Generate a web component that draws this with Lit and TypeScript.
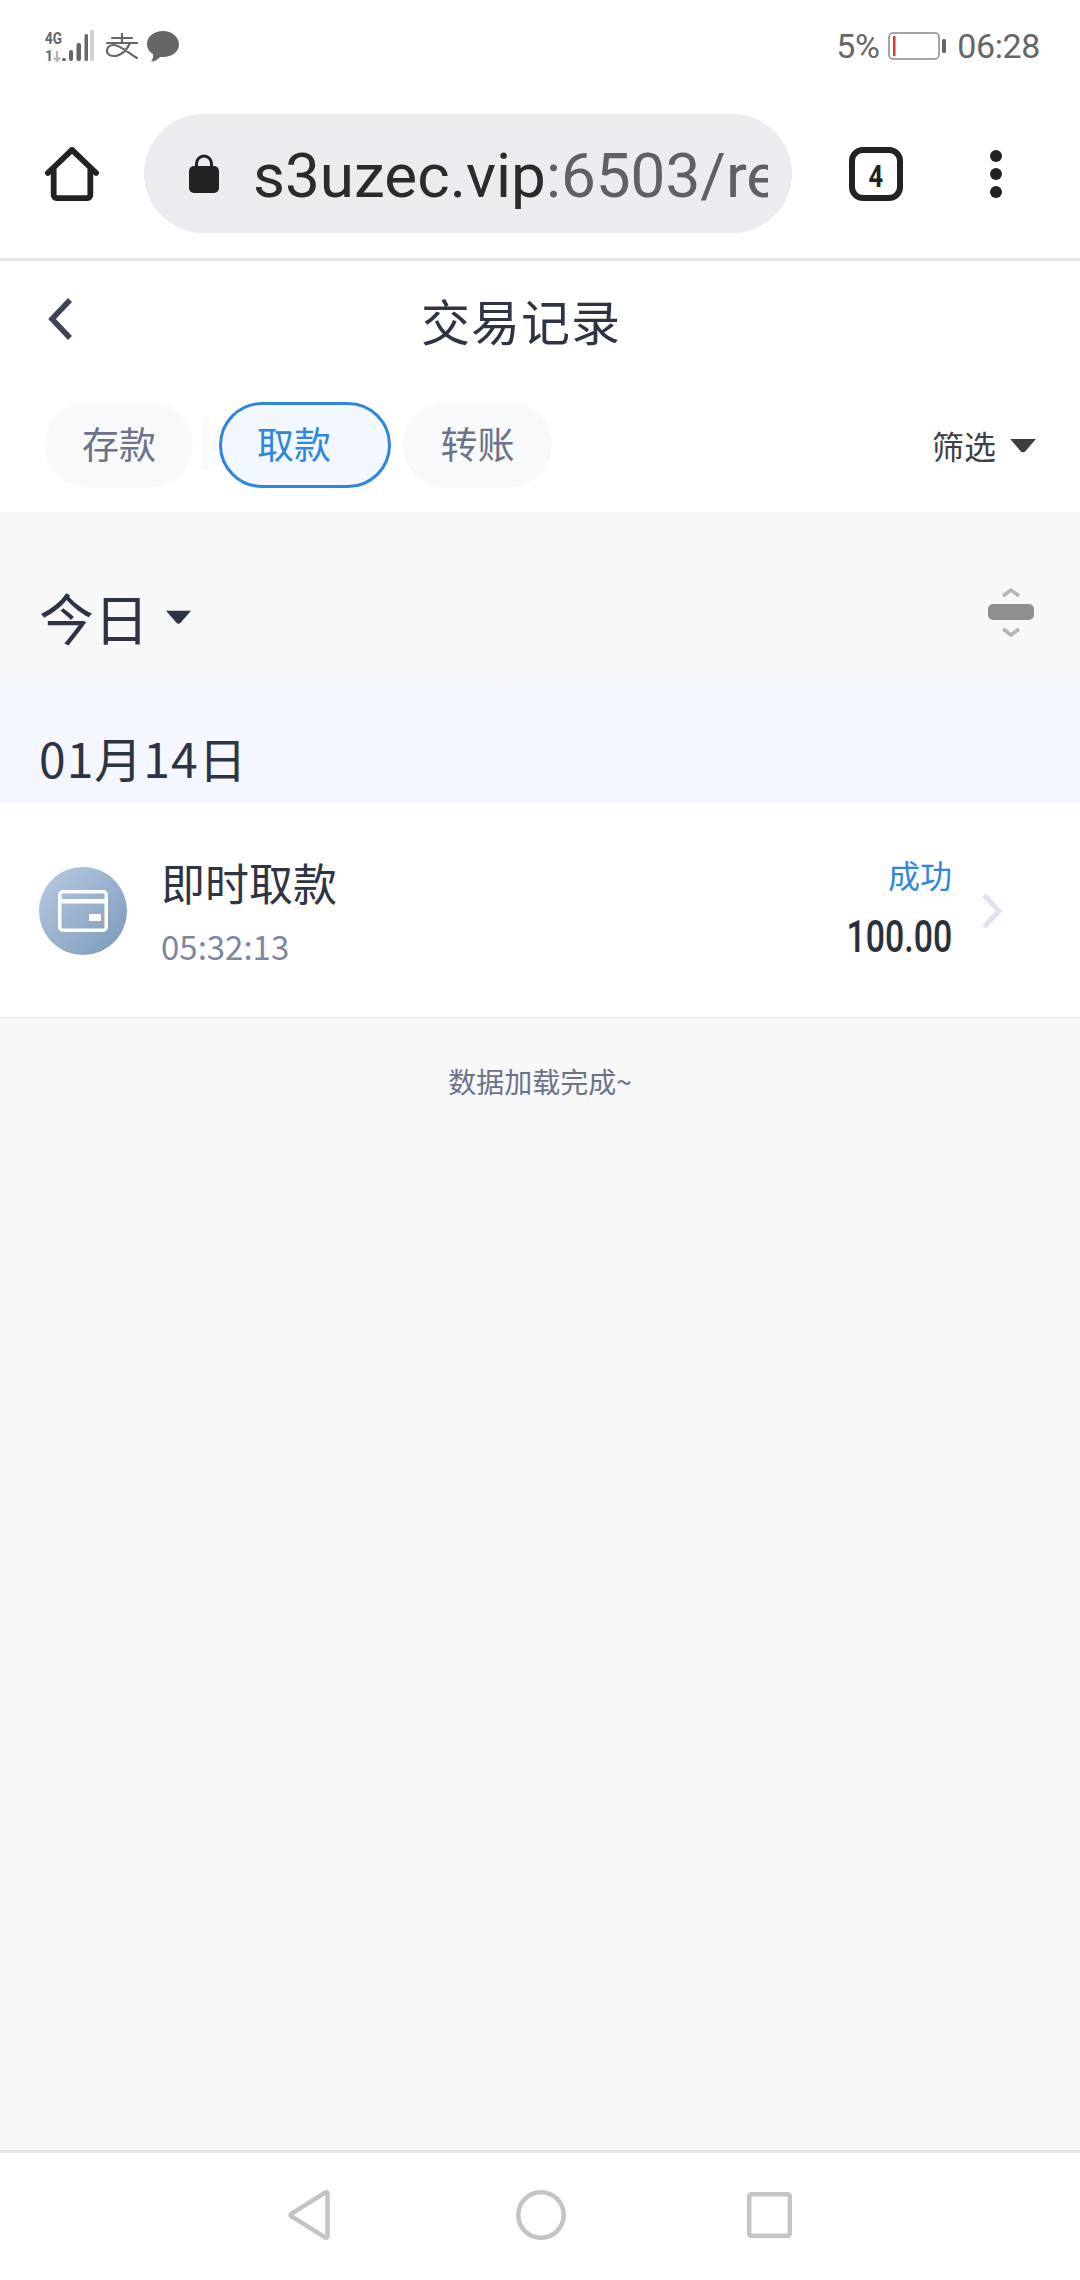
import { LitElement, html, css } from "lit";
import { customElement } from "lit/decorators.js";

@customElement("app-root")
export class AppRoot extends LitElement {
  static styles = css`
    :host {
      display: flex;
      flex-direction: column;
      width: 1080px;
      height: 2280px;
      overflow: hidden;
      background: #f8f8f9;
      font-family: "Noto Sans CJK SC", "Noto Sans", sans-serif;
      color: #2f3444;
    }
    svg { display: block; flex: none; }

    /* system status bar */
    .status {
      height: 92px;
      flex: none;
      background: #fff;
      display: flex;
      align-items: center;
      padding: 0 40px 0 44px;
      font-family: Roboto, sans-serif;
      font-size: 34px;
      color: #666;
    }
    .status .signal { overflow: visible; }
    .status .alipay { margin-left: 12px; }
    .status .bubble { margin-left: 9px; }
    .status .spacer { flex: 1; }
    .status .pct { letter-spacing: -0.5px; }
    .status .battery { margin: 0 11px 0 9px; }
    .status .clock { letter-spacing: -0.4px; }

    /* browser toolbar */
    .toolbar {
      height: 166px;
      flex: none;
      background: #fff;
      border-bottom: 3px solid #e5e5e5;
      display: flex;
      align-items: flex-start;
    }
    .toolbar .home { margin: 55px 0 0 45px; }
    .pill {
      margin: 22px 0 0 45px;
      width: 648px;
      height: 119px;
      flex: none;
      border-radius: 60px;
      background: #ebecf0;
      display: flex;
      align-items: center;
      padding-left: 45px;
      box-sizing: border-box;
    }
    .url {
      margin-left: 34px;
      padding-top: 4px;
      width: 515px;
      overflow: hidden;
      white-space: nowrap;
      font: 400 62px/80px Roboto, sans-serif;
      color: #2b2b2b;
    }
    .url span { color: #5f6063; }
    .tabs-btn { margin: 55px 0 0 57px; }
    .count {
      width: 54px;
      height: 54px;
      box-sizing: border-box;
      border: 6px solid #222;
      border-radius: 14px;
      display: flex;
      align-items: center;
      justify-content: center;
      font: 700 31px Roboto, sans-serif;
      color: #222;
    }
    .count span { display: block; margin-top: 4px; transform: scaleX(0.82); }
    .menu { margin: 58px 0 0 86px; }

    /* page title */
    .nav {
      height: 120px;
      flex: none;
      background: #fff;
      display: grid;
      grid-template-columns: 1fr auto 1fr;
      align-items: center;
      padding-left: 48px;
      padding-right: 86px;
    }
    .nav .back { margin-top: -4px; }
    .nav h1 { margin: -3px 0 0; font-size: 49px; font-weight: 400; line-height: 60px; color: #2f3444; letter-spacing: 1px; }

    /* transaction type tabs */
    .filters {
      height: 131px;
      flex: none;
      box-sizing: border-box;
      background: #fff;
      display: flex;
      align-items: flex-start;
      padding: 21px 42px 0 45px;
    }
    .tab {
      height: 86px;
      box-sizing: border-box;
      border-radius: 43px;
      background: #f7f9fb;
      color: #6c7288;
      font-size: 37px;
      line-height: 82px;
      text-align: center;
    }
    .tab.deposit { width: 148px; }
    .tab.withdraw {
      width: 172px;
      padding-right: 22px;
      background: #f3f8fe;
      border: 3px solid #2e86de;
      color: #2e86de;
      line-height: 76px;
    }
    .tab.transfer { width: 149px; margin-left: 12px; }
    .sep { width: 6px; height: 53px; margin: 15px 10px 0; background: #f7f9fb; }
    .filter-btn {
      margin-left: auto;
      display: flex;
      align-items: center;
      height: 86px;
      font-size: 32px;
      color: #3d3f47;
    }
    .filter-btn svg { margin-left: 12px; }

    /* period selector */
    .period {
      height: 161px;
      flex: none;
      box-sizing: border-box;
      padding: 46px 46px 0 39px;
      display: flex;
      align-items: center;
    }
    .period .label { font-size: 55px; line-height: 70px; color: #2f3444; }
    .period .caret { margin: 2px 0 0 16px; }
    .period .sort { margin: -6px 0 0 auto; }

    /* day header */
    .day {
      height: 130px;
      flex: none;
      box-sizing: border-box;
      background: linear-gradient(#f8f8f9, #f4f8fe 8%);
      padding: 53px 0 0 39px;
      font-size: 48px;
      line-height: 62px;
      letter-spacing: 1px;
      color: #2f3444;
    }

    /* record row */
    .row {
      height: 216px;
      flex: none;
      box-sizing: border-box;
      background: #fff;
      border-bottom: 2px solid #f1f1f2;
      display: flex;
      align-items: flex-start;
      padding: 0 78px 0 39px;
    }
    .avatar {
      margin-top: 64px;
      width: 88px;
      height: 88px;
      border-radius: 50%;
      background: linear-gradient(135deg, #b9cbe2, #7b98b9);
      display: flex;
      align-items: center;
      justify-content: center;
    }
    .info { margin-left: 34px; padding-top: 49px; }
    .info .title { font-size: 44px; line-height: 60px; color: #2f3444; }
    .info .time { margin-top: 12px; font-size: 33px; line-height: 44px; color: #7d86a2; }
    .result { margin-left: auto; padding-top: 49px; text-align: right; }
    .result .state { font-size: 32px; line-height: 44px; color: #2e86de; }
    .result .amount {
      margin-top: 16px;
      font: 500 44px/50px Roboto, sans-serif;
      color: #2b2f3c;
      transform: scaleX(0.77);
      transform-origin: right center;
    }
    .chevron { margin: 90px 0 0 30px; }

    .done {
      flex: none;
      margin-top: 42px;
      text-align: center;
      font-size: 28px;
      line-height: 40px;
      color: #6c7288;
    }
    .fill { flex: 1; }

    /* system navigation bar */
    .sysnav {
      height: 130px;
      flex: none;
      box-sizing: border-box;
      background: #fff;
      border-top: 3px solid #e5e5e5;
      display: flex;
      align-items: flex-start;
      padding-top: 37px;
    }
    .sysnav .back { margin-left: 288px; }
    .sysnav .circle { margin-left: 186px; }
    .sysnav .square { margin: 2px 0 0 181px; }
  `;

  render() {
    return html`
      <div class="status">
        <svg class="signal" width="50" height="32" viewBox="0 0 50 32">
          <text x="1" y="14" font-family="Roboto, sans-serif" font-size="17" font-weight="700" fill="#666" textLength="17" lengthAdjust="spacingAndGlyphs">4G</text>
          <text x="1" y="31" font-family="Roboto, sans-serif" font-size="14" font-weight="700" fill="#666">1</text>
          <path d="M13 21v10M10 27.5l3 3.5 3-3.5" fill="none" stroke="#b5b5b5" stroke-width="2"/>
          <rect x="18" y="28" width="4" height="3" rx="1.5" fill="#666"/>
          <rect x="25" y="20" width="4" height="11" rx="2" fill="#666"/>
          <rect x="32.5" y="13" width="4.5" height="18" rx="2" fill="#666"/>
          <rect x="40.5" y="4" width="3.5" height="27" rx="1.5" fill="#666"/>
          <rect x="46" y="0" width="4" height="31" rx="1" fill="#d2d2d2"/>
        </svg>
        <svg class="alipay" width="32" height="26" viewBox="0 0 32 26">
          <path d="M6 5h20M1 10h30M16 0v10M31 25C24 21 14 12 8 12 3 12 1 15 1 18c0 3 3 5 7 5 7 0 13-6 16-13" fill="none" stroke="#666" stroke-width="2.2" stroke-linecap="round"/>
        </svg>
        <svg class="bubble" width="32" height="31" viewBox="0 0 32 31">
          <path d="M16 0C7 0 0 5.5 0 13c0 4.5 2.5 8 6 10 .5 3-.5 5.5-2 7.5 4 0 7-2 9-4.5h3c9 0 16-5 16-12.5S25 0 16 0z" fill="#666"/>
        </svg>
        <span class="spacer"></span>
        <span class="pct">5%</span>
        <svg class="battery" width="58" height="28" viewBox="0 0 58 28">
          <rect x="1" y="1" width="50" height="26" rx="4" fill="none" stroke="#888" stroke-width="1.5"/>
          <rect x="5" y="4" width="2.5" height="20" fill="#de3a2e"/>
          <rect x="54" y="7" width="4" height="14" rx="1.5" fill="#666"/>
        </svg>
        <span class="clock">06:28</span>
      </div>

      <div class="toolbar">
        <svg class="home" width="54" height="54" viewBox="0 0 56 56">
          <path d="M3 27 28 3l25 24M9 22v28a3 3 0 0 0 3 3h32a3 3 0 0 0 3-3V22" fill="none" stroke="#222" stroke-width="6" stroke-linecap="round" stroke-linejoin="round"/>
        </svg>
        <div class="pill">
          <svg width="30" height="39" viewBox="0 0 30 39">
            <path d="M7.5 15V9.5a7.5 7.5 0 0 1 15 0V15" fill="none" stroke="#222" stroke-width="3"/>
            <rect x="0" y="12" width="30" height="27" rx="5" fill="#222"/>
          </svg>
          <div class="url">s3uzec.vip<span>:6503/re</span></div>
        </div>
        <div class="tabs-btn"><div class="count"><span>4</span></div></div>
        <svg class="menu" width="14" height="48" viewBox="0 0 14 48">
          <circle cx="7" cy="6" r="6" fill="#222"/>
          <circle cx="7" cy="24" r="6" fill="#222"/>
          <circle cx="7" cy="42" r="6" fill="#222"/>
        </svg>
      </div>

      <div class="nav">
        <svg class="back" width="26" height="44" viewBox="0 0 26 44">
          <path d="M22 3 4 22l18 19" fill="none" stroke="#3f4454" stroke-width="5.5"/>
        </svg>
        <h1>交易记录</h1>
        <span></span>
      </div>

      <div class="filters">
        <div class="tab deposit">存款</div>
        <div class="sep"></div>
        <div class="tab withdraw">取款</div>
        <div class="tab transfer">转账</div>
        <div class="filter-btn">
          筛选
          <svg width="30" height="15" viewBox="0 0 26 14"><path d="M1 1h24L15 12.5a3 3 0 0 1-4 0z" fill="#3d3d3d"/></svg>
        </div>
      </div>

      <div class="period">
        <span class="label">今日</span>
        <svg class="caret" width="27" height="16" viewBox="0 0 26 14"><path d="M1 1h24L15 12.5a3 3 0 0 1-4 0z" fill="#2f3444"/></svg>
        <svg class="sort" width="46" height="50" viewBox="0 0 46 50">
          <path d="M15 8l8-6 8 6M15 41l8 6 8-6" fill="none" stroke="#b5b5b5" stroke-width="3.5"/>
          <rect x="0" y="16" width="46" height="16" rx="5" fill="#8f8f8f"/>
        </svg>
      </div>

      <div class="day">01月14日</div>

      <div class="row">
        <div class="avatar">
          <svg width="50" height="42" viewBox="0 0 50 42">
            <rect x="1.8" y="1.8" width="46.4" height="38.4" rx="3" fill="none" stroke="#fff" stroke-width="3.5"/>
            <rect x="2" y="9" width="46" height="4.5" fill="#fff"/>
            <rect x="31" y="24" width="12" height="7" fill="#fff"/>
          </svg>
        </div>
        <div class="info">
          <div class="title">即时取款</div>
          <div class="time">05:32:13</div>
        </div>
        <div class="result">
          <div class="state">成功</div>
          <div class="amount">100.00</div>
        </div>
        <svg class="chevron" width="20" height="36" viewBox="0 0 20 36">
          <path d="M2 2l15 16L2 34" fill="none" stroke="#dfe3ec" stroke-width="5"/>
        </svg>
      </div>

      <div class="done">数据加载完成~</div>
      <div class="fill"></div>

      <div class="sysnav">
        <svg class="back" width="42" height="50" viewBox="0 0 42 50">
          <path d="M39.5 3.5v43a1.3 1.3 0 0 1-2 1.1L3.2 26.1a1.3 1.3 0 0 1 0-2.2L37.5 2.4a1.3 1.3 0 0 1 2 1.1z" fill="none" stroke="#c4c4c4" stroke-width="4.5" stroke-linejoin="round"/>
        </svg>
        <svg class="circle" width="50" height="50" viewBox="0 0 50 50">
          <circle cx="25" cy="25" r="22.7" fill="none" stroke="#c4c4c4" stroke-width="4.5"/>
        </svg>
        <svg class="square" width="45" height="46" viewBox="0 0 45 46">
          <rect x="2.2" y="2.2" width="40.6" height="41.6" rx="2.5" fill="none" stroke="#c4c4c4" stroke-width="4.5"/>
        </svg>
      </div>
    `;
  }
}
